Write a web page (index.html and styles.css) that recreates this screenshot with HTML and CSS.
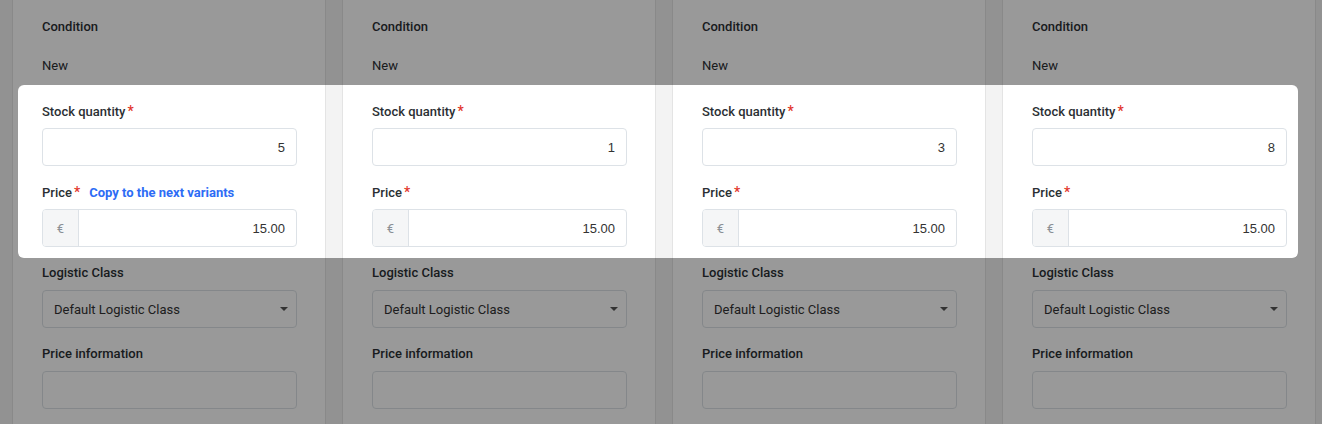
FILE: index.html
```html
<!DOCTYPE html>
<html>
<head>
<meta charset="utf-8">
<link rel="stylesheet" href="styles.css">
</head>
<body>
<div class="page">
  <div class="grid">
    <div class="card">
      <div class="display"><div class="label">Condition</div><div class="value">New</div></div>
      <div class="group"><div class="label">Stock quantity<span class="req">*</span></div><div class="input num">5</div></div>
      <div class="group"><div class="label">Price<span class="req">*</span><a class="copy">Copy to the next variants</a></div><div class="input money"><span class="addon">€</span><span class="amount">15.00</span></div></div>
      <div class="group"><div class="label">Logistic Class</div><div class="input select"><span>Default Logistic Class</span><span class="caret"></span></div></div>
      <div class="group"><div class="label">Price information</div><div class="input"></div></div>
    </div>
    <div class="card">
      <div class="display"><div class="label">Condition</div><div class="value">New</div></div>
      <div class="group"><div class="label">Stock quantity<span class="req">*</span></div><div class="input num">1</div></div>
      <div class="group"><div class="label">Price<span class="req">*</span></div><div class="input money"><span class="addon">€</span><span class="amount">15.00</span></div></div>
      <div class="group"><div class="label">Logistic Class</div><div class="input select"><span>Default Logistic Class</span><span class="caret"></span></div></div>
      <div class="group"><div class="label">Price information</div><div class="input"></div></div>
    </div>
    <div class="card">
      <div class="display"><div class="label">Condition</div><div class="value">New</div></div>
      <div class="group"><div class="label">Stock quantity<span class="req">*</span></div><div class="input num">3</div></div>
      <div class="group"><div class="label">Price<span class="req">*</span></div><div class="input money"><span class="addon">€</span><span class="amount">15.00</span></div></div>
      <div class="group"><div class="label">Logistic Class</div><div class="input select"><span>Default Logistic Class</span><span class="caret"></span></div></div>
      <div class="group"><div class="label">Price information</div><div class="input"></div></div>
    </div>
    <div class="card">
      <div class="display"><div class="label">Condition</div><div class="value">New</div></div>
      <div class="group"><div class="label">Stock quantity<span class="req">*</span></div><div class="input num">8</div></div>
      <div class="group"><div class="label">Price<span class="req">*</span></div><div class="input money"><span class="addon">€</span><span class="amount">15.00</span></div></div>
      <div class="group"><div class="label">Logistic Class</div><div class="input select"><span>Default Logistic Class</span><span class="caret"></span></div></div>
      <div class="group"><div class="label">Price information</div><div class="input"></div></div>
    </div>
  </div>
  <div class="spotlight"></div>
</div>
</body>
</html>
```
FILE: styles.css
```css
html, body {
  margin: 0;
  padding: 0;
  background: #f3f3f3;
  overflow: hidden;
}
.page {
  position: relative;
  width: 1322px;
  height: 424px;
  overflow: hidden;
  font-family: Roboto, "Liberation Sans", sans-serif;
  font-size: 13px;
  color: #2b2f33;
}
.grid {
  display: grid;
  grid-template-columns: repeat(4, 1fr);
  column-gap: 16px;
  width: 1304px;
  margin-left: 12px;
  height: 424px;
}
.card {
  background: #fff;
  border-left: 1px solid #e4e4e4;
  border-right: 1px solid #e4e4e4;
  padding: 0 28px 0 29px;
}
.display {
  padding-top: 17px;
}
.label {
  font-weight: 500;
  height: 20px;
  line-height: 20px;
  display: flex;
  align-items: baseline;
  overflow: visible;
}
.display .value {
  line-height: 20px;
  margin-top: 19px;
}
.display + .group {
  margin-top: 24.5px;
}
.group + .group {
  margin-top: 15.5px;
}
.group .label {
  margin-bottom: 7.5px;
}
.req {
  color: #e2352a;
  margin-left: 2px;
  font-size: 14px;
  line-height: 20px;
}
.copy {
  color: #2d6cf5;
  font-weight: 700;
  margin-left: 9px;
  cursor: pointer;
}
.input {
  height: 38px;
  box-sizing: border-box;
  border: 1px solid #dde2e7;
  border-radius: 4px;
  background: #fff;
  display: flex;
  align-items: center;
}
.num, .amount {
  justify-content: flex-end;
  padding-right: 11px;
  font-family: "Liberation Sans", Arial, sans-serif;
  color: #333;
}
.money {
  overflow: hidden;
}
.addon {
  width: 35px;
  height: 100%;
  background: #f5f6f7;
  border-right: 1px solid #dde2e7;
  color: #8a9096;
  display: flex;
  align-items: center;
  justify-content: center;
}
.amount {
  flex: 1;
  display: flex;
  align-items: center;
}
.select {
  justify-content: space-between;
  padding: 0 8px 0 11px;
  color: #333;
}
.caret {
  width: 0;
  height: 0;
  border-left: 4px solid transparent;
  border-right: 4px solid transparent;
  border-top: 4px solid #555;
  margin-top: -1px;
}
.spotlight {
  position: absolute;
  left: 17.5px;
  top: 85px;
  width: 1280px;
  height: 173px;
  border-radius: 6px;
  box-shadow: 0 0 0 3000px rgba(0, 0, 0, 0.4);
  pointer-events: none;
}
```
